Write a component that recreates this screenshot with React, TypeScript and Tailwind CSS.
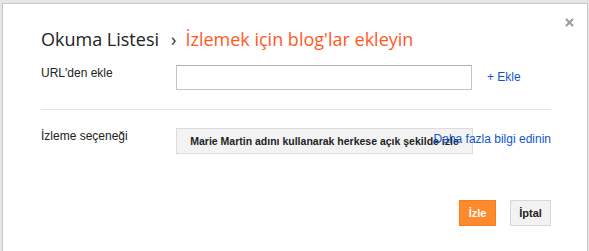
import React from "react";

export default function App() {
  const arial = { fontFamily: '"Liberation Sans", Arial, sans-serif' };
  return (
    <div className="w-[589px] h-[251px] overflow-hidden bg-[#e6e6e6] flex pt-[3px] pl-[2px] pr-[1px]">
      <div
        className="relative flex-1 bg-white border border-b-0 border-[#c6c6c6] pl-[38px] pr-[36px] pt-[23px]"
        style={arial}
      >
        <svg
          className="absolute right-[13px] top-[14px]"
          width="9"
          height="9"
          viewBox="0 0 9 9"
        >
          <path d="M1 1 L8 8 M8 1 L1 8" stroke="#9a9a9a" strokeWidth="2" />
        </svg>

        <h1
          className="text-[18px] leading-[24px] text-[#222] flex items-baseline"
          style={{ fontFamily: '"Open Sans", sans-serif' }}
        >
          <span>Okuma Listesi</span>
          <span className="ml-[12px] mr-[9px] text-[#333]">›</span>
          <span className="text-[#ff5a1e]">İzlemek için blog'lar ekleyin</span>
        </h1>

        <div className="mt-[14px] flex items-start">
          <div className="w-[135px] text-[12px] leading-[16px] text-[#222]">
            URL'den ekle
          </div>
          <input
            type="text"
            className="w-[296px] h-[25px] border border-[#c4c4c4] border-t-[#b0b0b0] bg-white outline-none"
          />
          <a className="ml-[15px] mt-[4px] text-[12px] leading-[16px] text-[#1155cc] cursor-pointer">
            + Ekle
          </a>
        </div>

        <div className="mt-[19px] h-px bg-[#e5e5e5]" />

        <div className="relative mt-[18px] flex items-start">
          <div className="w-[135px] text-[12px] leading-[16px] text-[#222]">
            İzleme seçeneği
          </div>
          <button className="w-[297px] h-[26px] bg-[#f3f3f3] border border-[#dcdcdc] text-[10.5px] font-bold text-[#222] flex items-center justify-center pt-[1px]">
            Marie Martin adını kullanarak herkese açık şekilde izle
          </button>
          <a className="absolute right-0 top-[3px] text-[12px] leading-[16px] text-[#1155cc] cursor-pointer">
            Daha fazla bilgi edinin
          </a>
        </div>

        <div className="mt-[46px] flex justify-end gap-[14px]">
          <button className="w-[37px] h-[26px] bg-[#fd8a2d] border border-[#f27f20] text-white text-[11px] font-bold flex items-center justify-center">
            İzle
          </button>
          <button className="w-[41px] h-[26px] bg-[#f2f2f2] border border-[#d8d8d8] text-[#222] text-[11px] font-bold flex items-center justify-center">
            İptal
          </button>
        </div>
      </div>
    </div>
  );
}
